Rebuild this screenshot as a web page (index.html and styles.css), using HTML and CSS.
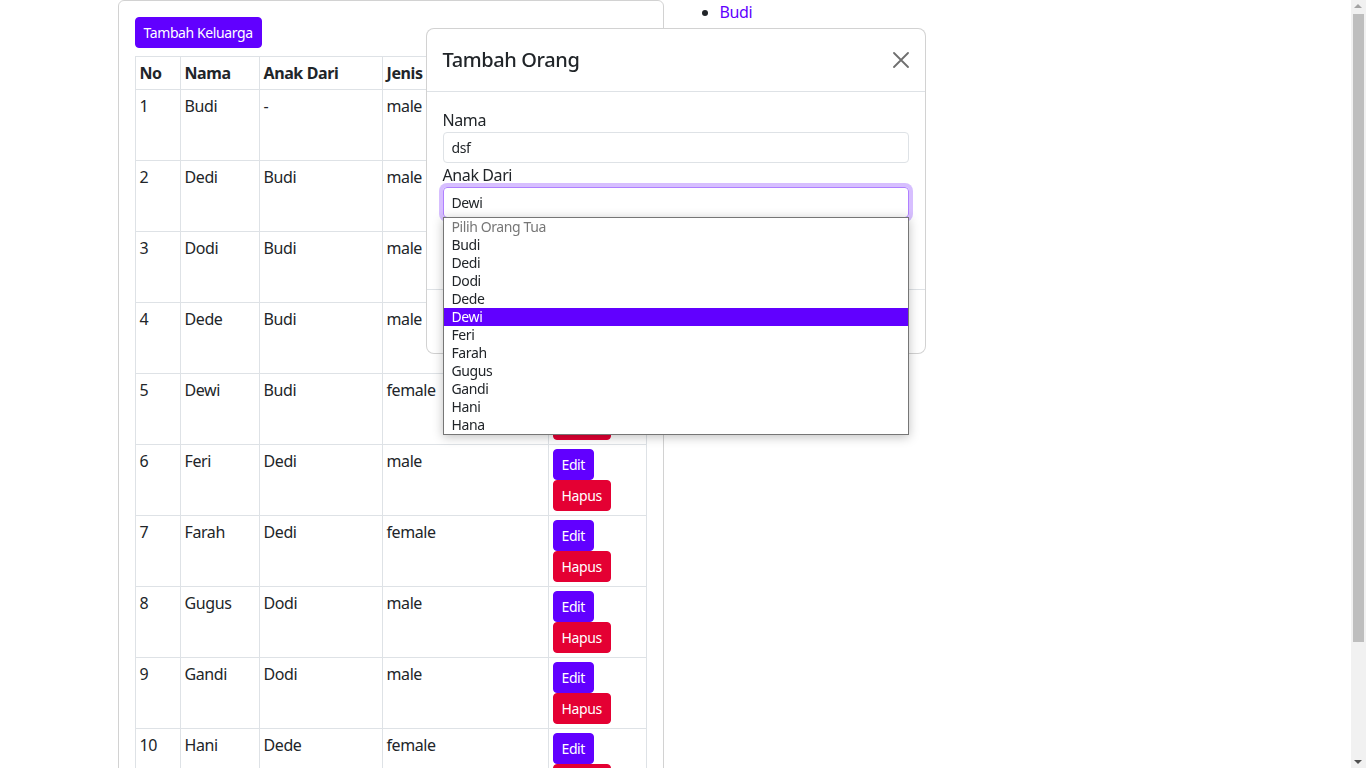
FILE: index.html
```html
<!DOCTYPE html>
<html lang="id">
<head>
<meta charset="utf-8">
<title>Keluarga</title>
<link rel="stylesheet" href="styles.css">
</head>
<body>
<div class="page">
  <div class="container">
    <div class="row">
      <div class="col">
        <div class="card">
          <div class="card-body">
            <button class="btn btn-primary btn-sm add-btn">Tambah Keluarga</button>
            <table class="table">
              <colgroup>
                <col class="c-no"><col class="c-nama"><col class="c-anak"><col class="c-jenis"><col class="c-aksi">
              </colgroup>
              <thead>
                <tr><th>No</th><th>Nama</th><th>Anak Dari</th><th>Jenis Kelamin</th><th>Aksi</th></tr>
              </thead>
              <tbody>
                <tr><td>1</td><td>Budi</td><td>-</td><td>male</td><td><button class="btn btn-primary btn-sm">Edit</button><br><button class="btn btn-danger btn-sm">Hapus</button></td></tr>
                <tr><td>2</td><td>Dedi</td><td>Budi</td><td>male</td><td><button class="btn btn-primary btn-sm">Edit</button><br><button class="btn btn-danger btn-sm">Hapus</button></td></tr>
                <tr><td>3</td><td>Dodi</td><td>Budi</td><td>male</td><td><button class="btn btn-primary btn-sm">Edit</button><br><button class="btn btn-danger btn-sm">Hapus</button></td></tr>
                <tr><td>4</td><td>Dede</td><td>Budi</td><td>male</td><td><button class="btn btn-primary btn-sm">Edit</button><br><button class="btn btn-danger btn-sm">Hapus</button></td></tr>
                <tr><td>5</td><td>Dewi</td><td>Budi</td><td>female</td><td><button class="btn btn-primary btn-sm">Edit</button><br><button class="btn btn-danger btn-sm">Hapus</button></td></tr>
                <tr><td>6</td><td>Feri</td><td>Dedi</td><td>male</td><td><button class="btn btn-primary btn-sm">Edit</button><br><button class="btn btn-danger btn-sm">Hapus</button></td></tr>
                <tr><td>7</td><td>Farah</td><td>Dedi</td><td>female</td><td><button class="btn btn-primary btn-sm">Edit</button><br><button class="btn btn-danger btn-sm">Hapus</button></td></tr>
                <tr><td>8</td><td>Gugus</td><td>Dodi</td><td>male</td><td><button class="btn btn-primary btn-sm">Edit</button><br><button class="btn btn-danger btn-sm">Hapus</button></td></tr>
                <tr><td>9</td><td>Gandi</td><td>Dodi</td><td>male</td><td><button class="btn btn-primary btn-sm">Edit</button><br><button class="btn btn-danger btn-sm">Hapus</button></td></tr>
                <tr><td>10</td><td>Hani</td><td>Dede</td><td>female</td><td><button class="btn btn-primary btn-sm">Edit</button><br><button class="btn btn-danger btn-sm">Hapus</button></td></tr>
              </tbody>
            </table>
          </div>
        </div>
      </div>
      <div class="col">
        <ul class="tree">
          <li><a href="#">Budi</a></li>
        </ul>
      </div>
    </div>
  </div>
</div>

<div class="modal">
  <div class="modal-dialog">
    <div class="modal-content">
      <div class="modal-header">
        <h5 class="modal-title">Tambah Orang</h5>
        <button class="btn-close" aria-label="Close">
          <svg width="16" height="16" viewBox="0 0 16 16"><path d="M1 1L15 15M15 1L1 15" stroke="#6f6f6f" stroke-width="1.8" stroke-linecap="round"/></svg>
        </button>
      </div>
      <div class="modal-body">
        <label class="form-label">Nama</label>
        <div class="form-control">dsf</div>
        <label class="form-label">Anak Dari</label>
        <div class="select-wrap">
          <div class="form-control focused">Dewi</div>
          <ul class="options">
            <li class="placeholder">Pilih Orang Tua</li>
            <li>Budi</li>
            <li>Dedi</li>
            <li>Dodi</li>
            <li>Dede</li>
            <li class="selected">Dewi</li>
            <li>Feri</li>
            <li>Farah</li>
            <li>Gugus</li>
            <li>Gandi</li>
            <li>Hani</li>
            <li>Hana</li>
          </ul>
        </div>
        <div class="obscured">
          <label class="form-label">Jenis Kelamin</label>
          <div class="form-control">male</div>
        </div>
      </div>
      <div class="modal-footer"></div>
    </div>
  </div>
</div>

<div class="scrollbar">
  <div class="sb-arrow up"></div>
  <div class="sb-thumb"></div>
  <div class="sb-arrow down"></div>
</div>
</body>
</html>
```

FILE: styles.css
```css
html, body {
  margin: 0;
  padding: 0;
  overflow: hidden;
  height: 100%;
}
body {
  font-family: "Noto Sans", "Open Sans", sans-serif;
  font-size: 16px;
  line-height: 1.5;
  letter-spacing: -0.025em;
  color: #212529;
  background: #fff;
}
.page {
  margin-right: 15px;
}
.container {
  box-sizing: border-box;
  max-width: 1140px;
  margin: 0 auto;
  padding: 0 12px;
}
.row {
  display: flex;
  margin: 0 -12px;
}
.col {
  flex: 0 0 50%;
  box-sizing: border-box;
  padding: 0 12px;
}
.card {
  border: 1px solid rgba(0, 0, 0, .175);
  border-radius: 6px;
}
.card-body {
  padding: 16px;
}
.btn {
  display: inline-block;
  font-family: inherit;
  letter-spacing: inherit;
  border: 1px solid transparent;
  color: #fff;
  cursor: pointer;
}
.btn-sm {
  font-size: 14px;
  line-height: 21px;
  padding: 4px 8px;
  border-radius: 4px;
}
.btn-primary {
  background: #6100ff;
  border-color: #6100ff;
}
.btn-danger {
  background: #e40033;
  border-color: #e40033;
}
.add-btn {
  margin-bottom: 8px;
}
.table {
  width: 100%;
  border-collapse: collapse;
  table-layout: fixed;
}
.c-no { width: 45px; }
.c-nama { width: 79px; }
.c-anak { width: 123px; }
.c-jenis { width: 166px; }
.table th, .table td {
  border: 1px solid #dee2e6;
  padding: 4px;
  text-align: left;
  vertical-align: top;
  white-space: nowrap;
  overflow: hidden;
}
.table th {
  font-weight: 700;
}
.table td .btn {
  vertical-align: top;
}
.tree {
  margin: 0;
  padding-left: 32px;
}
.tree a {
  color: #6100ff;
  text-decoration: none;
}

/* modal */
.modal {
  position: fixed;
  top: 0;
  left: 0;
  right: 15px;
}
.modal-dialog {
  width: 500px;
  margin: 28px auto;
}
.modal-content {
  background: #fff;
  border: 1px solid rgba(0, 0, 0, .175);
  border-radius: 8px;
}
.modal-header {
  display: flex;
  align-items: center;
  padding: 16px;
  border-bottom: 1px solid #dee2e6;
}
.modal-title {
  margin: 0;
  font-size: 20px;
  font-weight: 500;
  line-height: 30px;
}
.btn-close {
  display: flex;
  margin: -8px -8px -8px auto;
  padding: 8px;
  border: 0;
  background: transparent;
}
.modal-body {
  padding: 16px;
}
.form-label {
  display: block;
}
.form-control {
  box-sizing: border-box;
  height: 31px;
  padding: 4px 8px;
  font-size: 14px;
  line-height: 21px;
  border: 1px solid #dee2e6;
  border-radius: 4px;
}
.form-control.focused {
  border-color: #b080ff;
  box-shadow: 0 0 0 4px rgba(97, 0, 255, .25);
}
.obscured {
  visibility: hidden;
}
.select-wrap {
  position: relative;
}
.options {
  position: absolute;
  z-index: 5;
  top: 30px;
  left: 0;
  right: 0;
  margin: 0;
  padding: 0;
  list-style: none;
  background: #fff;
  border: 1px solid #767676;
  box-shadow: 0 2px 10px rgba(0, 0, 0, .25);
  font-size: 14px;
  line-height: 18px;
}
.options li {
  padding: 0 8px;
  height: 18px;
}
.options .placeholder {
  color: #777;
}
.options .selected {
  background: #6100ff;
  color: #fff;
}
.modal-footer {
  height: 39px;
  padding: 12px;
  border-top: 1px solid #dee2e6;
}

/* fake scrollbar */
.scrollbar {
  position: fixed;
  top: 0;
  right: 0;
  bottom: 0;
  width: 15px;
  background: #f1f1f1;
}
.sb-thumb {
  position: absolute;
  left: 2px;
  right: 2px;
  top: 14px;
  height: 628px;
  background: #bebebe;
}
.sb-arrow {
  position: absolute;
  left: 3px;
  width: 0;
  height: 0;
  border-left: 4px solid transparent;
  border-right: 4px solid transparent;
}
.sb-arrow.up {
  top: 4px;
  border-bottom: 4px solid #a3a3a3;
}
.sb-arrow.down {
  bottom: 4px;
  border-top: 4px solid #505050;
}
```
